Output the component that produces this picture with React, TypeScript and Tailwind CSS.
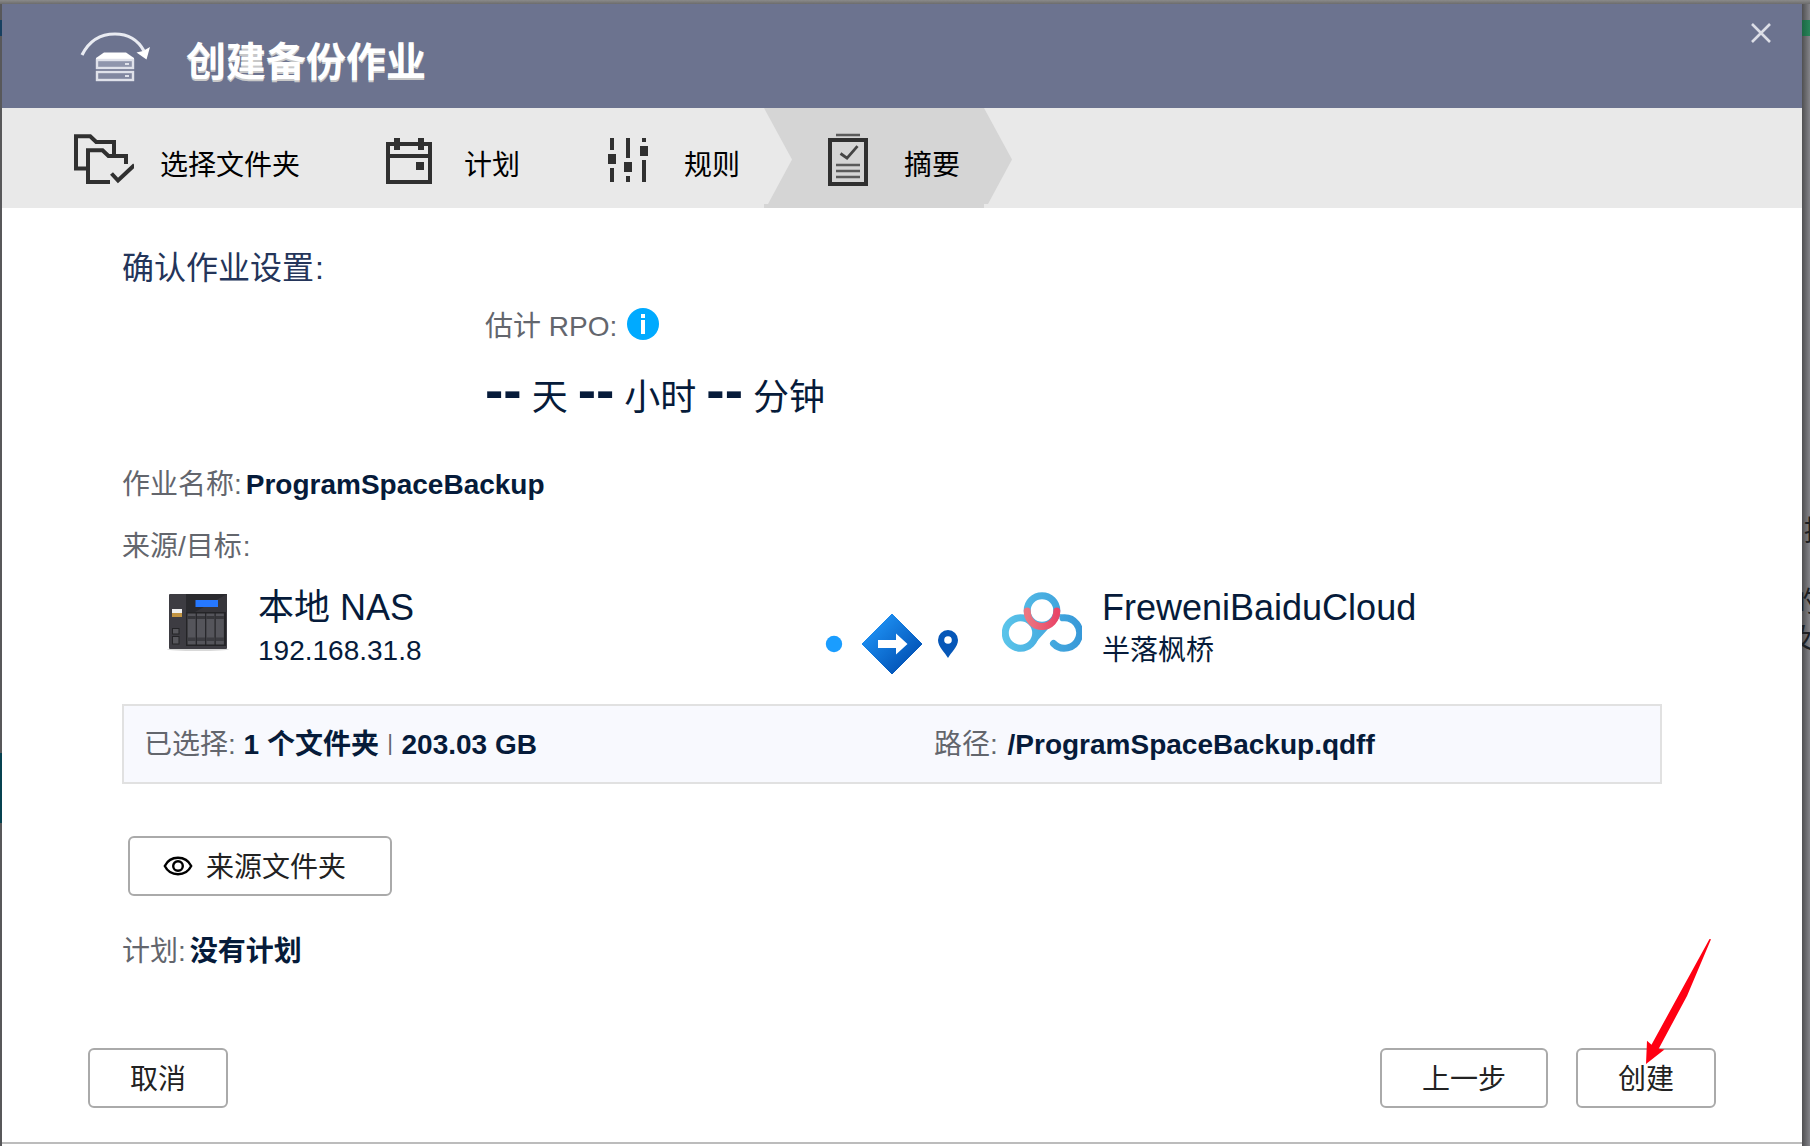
import React from "react";

const INK = "#303030";

function HeaderLogo() {
  return (
    <svg width="70" height="52" viewBox="80 31 70 52" fill="none" className="shrink-0">
      <path d="M82 55C89 41 101 34 115 34c13 0 23 6 29 17" stroke="#e9ebf2" strokeWidth="3.200" />
      <path d="M136.500 52.500l6.500-1.500 7-4-3.500 12.500z" fill="#fff" />
      <path d="M96 61v-3l8-5.500h22l8 5.500v3z" fill="#fff" />
      <rect x="97" y="60" width="36" height="8" fill="#8f95ac" stroke="#dfe1ea" strokeWidth="2.400" />
      <rect x="97" y="72" width="36" height="8" fill="#8187a0" stroke="#dfe1ea" strokeWidth="2.400" />
      <path d="M125 64h4M125 76h4" stroke="#dfe1ea" strokeWidth="2" />
    </svg>
  );
}

function FoldersIcon() {
  return (
    <svg width="60" height="60" viewBox="74 129 60 60" fill="none" stroke={INK} strokeWidth="4">
      <path d="M86 168.500H76V136.200h14.200l6 5.800H114v12.500" />
      <path d="M110 182H88V150.200h14.500l6 5.800H126v8" />
      <path d="M111.500 173.500l6.500 7 16.500-15.500" />
    </svg>
  );
}

function CalendarIcon() {
  return (
    <svg width="60" height="60" viewBox="378 129 60 60" fill="none">
      <rect x="388" y="144" width="42" height="38" stroke={INK} strokeWidth="4" />
      <path d="M387 156h44" stroke={INK} strokeWidth="4" />
      <path d="M394 138h6v12h-6zM418 138h6v12h-6zM416 162h8v8h-8z" fill={INK} />
    </svg>
  );
}

function SlidersIcon() {
  return (
    <svg width="60" height="60" viewBox="598 129 60 60" fill={INK}>
      <path d="M610 138h4v12h-4zM608 154h8v10h-8zM610 168h4v14h-4z" />
      <path d="M626 138h4v20h-4zM624 162h8v10h-8zM626 176h4v6h-4z" />
      <path d="M642 138h4v4h-4zM640 146h8v10h-8zM642 160h4v22h-4z" />
    </svg>
  );
}

function SummaryIcon() {
  return (
    <svg width="60" height="60" viewBox="818 129 60 60" fill="none">
      <rect x="830" y="140" width="36" height="44" stroke={INK} strokeWidth="4" />
      <path d="M836 135h24M836 165h24M836 171h24M836 177h24" stroke="#5a5a5a" strokeWidth="2.400" />
      <path d="M840.500 153.500l6.500 4.700 10.500-12" stroke="#444" strokeWidth="2.800" />
    </svg>
  );
}

function InfoIcon() {
  return (
    <svg width="32" height="32" viewBox="0 0 32 32" className="shrink-0">
      <circle cx="16" cy="16" r="16" fill="#00aaff" />
      <path d="M14 6h4v4h-4zM14 12h4v14h-4z" fill="#fff" />
    </svg>
  );
}

function NasIcon() {
  const bays = [188, 197.400, 206.800, 216.200];
  return (
    <svg width="64" height="60" viewBox="166 592 64 60" className="shrink-0">
      <ellipse cx="198" cy="649.500" rx="31" ry="1.500" fill="#d9d9d9" />
      <rect x="169" y="594" width="58" height="55" rx="1" fill="#3d3c42" />
      <rect x="186" y="594" width="41" height="18" fill="#2a2a2e" />
      <path d="M227 594v18h-32z" fill="#37363b" />
      <rect x="195.500" y="600" width="22.500" height="7" fill="#2678ff" />
      <rect x="186" y="612" width="40" height="34" fill="#242427" />
      {bays.map((x) => (
        <g key={x}>
          <rect x={x - 0.500} y="613.500" width="8.200" height="31" fill="#55555b" />
          <rect x={x - 0.500} y="616" width="8.200" height="3" fill="#37373b" />
          <rect x={x - 0.500} y="637.500" width="8.200" height="3.500" fill="#3c3c41" />
        </g>
      ))}
      <rect x="172" y="609" width="10" height="4" fill="#f0f0f0" />
      <rect x="172" y="613" width="10" height="4" fill="#c29442" />
      <rect x="172.500" y="628.500" width="6.500" height="5.500" fill="#57575c" stroke="#242427" />
      <rect x="172.500" y="636.500" width="6.500" height="7.500" fill="#57575c" stroke="#242427" />
    </svg>
  );
}

function TransferIcon() {
  return (
    <svg width="136" height="62" viewBox="825 613 136 62" className="shrink-0">
      <defs>
        <linearGradient id="diamond" x1="0" y1="0" x2="1" y2="1">
          <stop offset="0.200" stopColor="#1c8df0" />
          <stop offset="0.800" stopColor="#0355b8" />
        </linearGradient>
      </defs>
      <circle cx="834" cy="644" r="8.200" fill="#1a9dff" />
      <path d="M892 614l30 30-30 30-30-30z" fill="url(#diamond)" stroke="url(#diamond)" strokeLinejoin="round" />
      <path d="M878 640h18v-6.500l11.500 10.500-11.500 10.500V648h-18z" fill="#fff" />
      <path d="M948 658c-3-5.500-10-11-10-18a10 10 0 0 1 20 0c0 7-7 12.500-10 18z" fill="#0657b8" />
      <circle cx="948" cy="640" r="3.800" fill="#fff" />
    </svg>
  );
}

function BaiduIcon() {
  return (
    <svg width="80" height="62" viewBox="1002 591 80 62" fill="none" className="shrink-0">
      <defs>
        <linearGradient id="cloud" gradientUnits="userSpaceOnUse" x1="1002" y1="0" x2="1082" y2="0">
          <stop offset="0" stopColor="#5bc5ea" />
          <stop offset="1" stopColor="#3798d8" />
        </linearGradient>
        <linearGradient id="arc" x1="0" y1="0" x2="1" y2="0">
          <stop offset="0" stopColor="#eb7681" />
          <stop offset="1" stopColor="#e94567" />
        </linearGradient>
      </defs>
      <path d="M1032.500 646L1052.500 624 1062 614 1050 616 1034 632z" fill="url(#cloud)" />
      <circle cx="1020.500" cy="633" r="15.200" stroke="url(#cloud)" strokeWidth="7" />
      <path d="M1053.500 643.500A15.200 15.200 0 1 0 1063 617.800" stroke="url(#cloud)" strokeWidth="7" strokeLinecap="round" />
      <circle cx="1042" cy="611" r="12" fill="#fff" />
      <circle cx="1042" cy="610.500" r="14.800" stroke="url(#cloud)" strokeWidth="7" />
      <path d="M1027.200 611a14.800 15.500 0 0 0 29.600 0" stroke="url(#arc)" strokeWidth="7" strokeLinecap="round" />
    </svg>
  );
}

function EyeIcon() {
  return (
    <svg width="30" height="20" viewBox="0 0 30 20" fill="none" stroke="#000" strokeWidth="2.400" className="shrink-0">
      <path d="M1.800 10C4.500 4.500 9.500 1.800 15 1.800S25.500 4.500 28.200 10C25.500 15.500 20.500 18.200 15 18.200S4.500 15.500 1.800 10z" />
      <circle cx="15" cy="10" r="4.800" />
    </svg>
  );
}

function Step({ icon, label, first, active }: { icon: React.ReactNode; label: string; first?: boolean; active?: boolean }) {
  return (
    <div
      className={
        "relative flex h-[100px] items-center pl-[54px] " +
        (first ? "w-[304px]" : "w-[220px]") +
        (active ? " bg-[#d5d5d5]" : "")
      }
    >
      {active && (
        <>
          <svg className="absolute left-0 top-0" width="28" height="96" viewBox="0 0 28 96">
            <path d="M0 0l28 51.500L4 96H0z" fill="#e9e9e9" />
          </svg>
          <svg className="absolute left-full top-0" width="28" height="96" viewBox="0 0 28 96">
            <path d="M0 0l28 51.500L4 96H0z" fill="#d5d5d5" />
          </svg>
        </>
      )}
      <span className="pt-[2px]">{icon}</span>
      <span className="ml-[26px] pt-[15px] text-[28px] leading-10 text-black">{label}</span>
    </div>
  );
}

function Button({ children, className }: { children: React.ReactNode; className: string }) {
  return (
    <button
      className={
        "flex h-[60px] items-center rounded-md border-2 border-[#aaaaaa] bg-white text-[28px] leading-10 text-[#222] " +
        className
      }
    >
      {children}
    </button>
  );
}

function Dashes() {
  return <b className="relative -top-px text-[55px] leading-[0]">--</b>;
}

export default function App() {
  return (
    <div className="grid h-[1146px] w-[1810px] grid-cols-[2px_1800px_8px] grid-rows-[4px_1142px] overflow-hidden whitespace-nowrap bg-[#838383] font-['Liberation_Sans','Noto_Sans_CJK_SC',sans-serif] text-[28px] leading-10 text-[#061b3a]">
      <div className="col-span-3 bg-gradient-to-b from-[#8a8a8a] to-[#6c6c6c]" />

      <div className="flex flex-col bg-[#58585a]">
        <div className="mt-4 h-4 bg-[#174060]" />
        <div className="mt-[717px] h-[70px] bg-[#064250]" />
      </div>

      <main className="flex flex-col bg-white">
        <header className="flex h-[104px] items-start bg-[#6c738f]">
          <div className="ml-[78px] mt-[27px]">
            <HeaderLogo />
          </div>
          <h1 className="ml-[36px] mt-[26px] text-[40px] font-bold leading-[64px] text-white [text-shadow:0_2px_0_#c8c8c8]">
            创建备份作业
          </h1>
          <button className="ml-auto mr-[30px] mt-[18px]" aria-label="关闭">
            <svg width="22" height="22" viewBox="0 0 22 22" stroke="#dcdee6" strokeWidth="2.600">
              <path d="M2 2l18 18M20 2L2 20" />
            </svg>
          </button>
        </header>

        <nav className="flex h-[100px] bg-[#e9e9e9] pl-[18px]">
          <Step first icon={<FoldersIcon />} label="选择文件夹" />
          <Step icon={<CalendarIcon />} label="计划" />
          <Step icon={<SlidersIcon />} label="规则" />
          <Step active icon={<SummaryIcon />} label="摘要" />
        </nav>

        <section className="flex w-[1660px] flex-col pl-[120px]">
          <h2 className="mt-10 text-[32px] leading-10 text-[#24355a]">
            确认作业设置<span className="ml-px">:</span>
          </h2>

          <div className="ml-[363px] mt-[19px] flex h-10 text-[#63666d]">
            <span>估计 RPO:</span>
            <span className="ml-[10px] pt-px">
              <InfoIcon />
            </span>
          </div>
          <p className="ml-[363px] mt-[27px] h-12 text-[36px] leading-[48px]">
            <Dashes /> 天 <Dashes /> 小时 <Dashes /> 分钟
          </p>

          <p className="mt-[43px]">
            <span className="text-[#63666d]">作业名称:</span>
            <b className="ml-[4px]">ProgramSpaceBackup</b>
          </p>
          <p className="mt-[22px] text-[#63666d]">
            来源/目标<span className="ml-px">:</span>
          </p>

          <div className="flex h-[137px] items-start">
            <div className="ml-[44px] mt-[25px]">
              <NasIcon />
            </div>
            <div className="ml-[28px] mt-[17px] w-[567px]">
              <p className="text-[36px] leading-[48px]">本地 NAS</p>
              <p className="mt-px leading-9">192.168.31.8</p>
            </div>
            <div className="mt-[46px]">
              <TransferIcon />
            </div>
            <div className="ml-[41px] mt-[24px]">
              <BaiduIcon />
            </div>
            <div className="ml-[20px] mt-[17px]">
              <p className="text-[36px] leading-[48px]">FreweniBaiduCloud</p>
              <p className="mt-px leading-9">半落枫桥</p>
            </div>
          </div>

          <div className="flex h-[80px] items-center border-2 border-[#e1e1e1] bg-[#f8f9fe] pl-[20px] pt-[2px]">
            <p className="w-[790px] text-[#63666d]">
              已选择: <b className="text-[#061b3a]">1 个文件夹</b>{" "}
              <span className="relative -top-[4px] inline-block w-[7px] text-center text-[22px] leading-[0]">|</span>{" "}
              <b className="text-[#061b3a]">203.03 GB</b>
            </p>
            <p className="text-[#63666d]">
              路径: <b className="ml-[2px] text-[#061b3a]">/ProgramSpaceBackup.qdff</b>
            </p>
          </div>

          <Button className="ml-[6px] mt-[52px] w-[264px] pl-[33px]">
            <EyeIcon />
            <span className="ml-[13px] pt-[3px]">来源文件夹</span>
          </Button>

          <p className="mt-[36px]">
            <span className="text-[#63666d]">计划:</span>
            <b className="ml-[4px]">没有计划</b>
          </p>
        </section>

        <footer className="mt-[76px] flex h-[96px] items-start gap-[28px] border-b-2 border-[#bcbcbc] pl-[86px] pr-[86px]">
          <Button className="mr-auto w-[140px] justify-center pt-[3px]">取消</Button>
          <Button className="w-[168px] justify-center pt-[3px]">上一步</Button>
          <div className="relative">
            <Button className="w-[140px] justify-center pt-[3px]">创建</Button>
            <svg className="absolute left-[68px] top-[-110px]" width="70" height="128" viewBox="1644 938 70 128">
              <path d="M1711 939.300L1687 996 1658.700 1048.700 1664.500 1049.500 1646 1064 1647 1040.700 1651.500 1044.700 1681.500 990 1709.500 939z" fill="#ff0012" />
            </svg>
          </div>
        </footer>
      </main>

      <aside className="flex flex-col overflow-hidden bg-gradient-to-r from-[#505052] to-[#85858a] leading-10 text-[#1d1f22]">
        <div className="mt-4 h-4 shrink-0 bg-gradient-to-r from-[#1c6844] to-[#28855a]" />
        <span className="ml-[2px] mt-[476px]">提</span>
        <span className="-ml-[11px] mt-[31px]">的</span>
        <span className="-ml-[17px] -mt-[4px]">及</span>
      </aside>
    </div>
  );
}
